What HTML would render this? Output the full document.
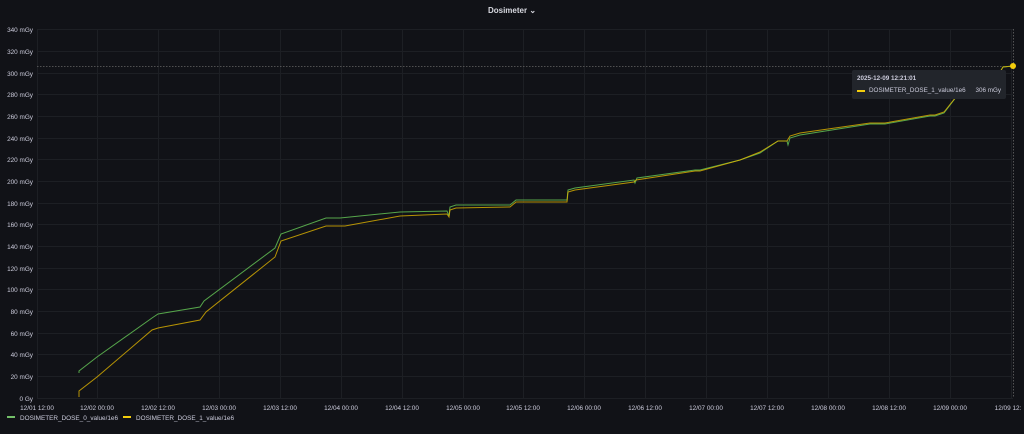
<!DOCTYPE html>
<html><head><style>
body{margin:0;background:#111217;width:1024px;height:434px;overflow:hidden;font-family:"Liberation Sans",sans-serif;color:#ccccdc}
.t{position:absolute;top:6px;left:0;width:1024px;text-align:center;font-size:8px;font-weight:bold;color:#d8d9e0}
svg{position:absolute;left:0;top:0}
.tip{position:absolute;left:852px;top:70px;width:154px;height:29px;background:#22252b;border-radius:2px;font-size:6.3px;color:#ccccdc}
</style></head><body>
<div class="t">Dosimeter ⌄</div>
<svg width="1024" height="434" font-family="Liberation Sans" font-size="6.4" fill="#ccccdc">
<g stroke="#1d1f24" stroke-width="1">
<line x1="37" x2="1013" y1="29.5" y2="29.5"/><line x1="37" x2="1013" y1="51.5" y2="51.5"/><line x1="37" x2="1013" y1="73.5" y2="73.5"/><line x1="37" x2="1013" y1="94.5" y2="94.5"/><line x1="37" x2="1013" y1="116.5" y2="116.5"/><line x1="37" x2="1013" y1="138.5" y2="138.5"/><line x1="37" x2="1013" y1="159.5" y2="159.5"/><line x1="37" x2="1013" y1="181.5" y2="181.5"/><line x1="37" x2="1013" y1="203.5" y2="203.5"/><line x1="37" x2="1013" y1="224.5" y2="224.5"/><line x1="37" x2="1013" y1="246.5" y2="246.5"/><line x1="37" x2="1013" y1="268.5" y2="268.5"/><line x1="37" x2="1013" y1="289.5" y2="289.5"/><line x1="37" x2="1013" y1="311.5" y2="311.5"/><line x1="37" x2="1013" y1="333.5" y2="333.5"/><line x1="37" x2="1013" y1="354.5" y2="354.5"/><line x1="37" x2="1013" y1="376.5" y2="376.5"/><line x1="37" x2="1013" y1="398.5" y2="398.5"/>
<line x1="37.5" x2="37.5" y1="29" y2="398"/><line x1="97.5" x2="97.5" y1="29" y2="398"/><line x1="158.5" x2="158.5" y1="29" y2="398"/><line x1="219.5" x2="219.5" y1="29" y2="398"/><line x1="280.5" x2="280.5" y1="29" y2="398"/><line x1="341.5" x2="341.5" y1="29" y2="398"/><line x1="402.5" x2="402.5" y1="29" y2="398"/><line x1="463.5" x2="463.5" y1="29" y2="398"/><line x1="523.5" x2="523.5" y1="29" y2="398"/><line x1="584.5" x2="584.5" y1="29" y2="398"/><line x1="645.5" x2="645.5" y1="29" y2="398"/><line x1="706.5" x2="706.5" y1="29" y2="398"/><line x1="767.5" x2="767.5" y1="29" y2="398"/><line x1="828.5" x2="828.5" y1="29" y2="398"/><line x1="889.5" x2="889.5" y1="29" y2="398"/><line x1="950.5" x2="950.5" y1="29" y2="398"/><line x1="1011.5" x2="1011.5" y1="29" y2="398"/>
</g>
<line x1="37" x2="1013" y1="66.5" y2="66.5" stroke="#666" stroke-dasharray="1.5,1.5" stroke-width="0.8"/>
<line x1="1013.5" x2="1013.5" y1="29" y2="398" stroke="#666" stroke-dasharray="1.5,1.5" stroke-width="0.8"/>
<g text-anchor="end">
<text x="33" y="32">340 mGy</text><text x="33" y="54">320 mGy</text><text x="33" y="76">300 mGy</text><text x="33" y="97">280 mGy</text><text x="33" y="119">260 mGy</text><text x="33" y="141">240 mGy</text><text x="33" y="162">220 mGy</text><text x="33" y="184">200 mGy</text><text x="33" y="206">180 mGy</text><text x="33" y="227">160 mGy</text><text x="33" y="249">140 mGy</text><text x="33" y="271">120 mGy</text><text x="33" y="292">100 mGy</text><text x="33" y="314">80 mGy</text><text x="33" y="336">60 mGy</text><text x="33" y="357">40 mGy</text><text x="33" y="379">20 mGy</text><text x="33" y="401">0 Gy</text>
</g>
<g text-anchor="middle">
<text x="37" y="410">12/01 12:00</text><text x="97" y="410">12/02 00:00</text><text x="158" y="410">12/02 12:00</text><text x="219" y="410">12/03 00:00</text><text x="280" y="410">12/03 12:00</text><text x="341" y="410">12/04 00:00</text><text x="402" y="410">12/04 12:00</text><text x="463" y="410">12/05 00:00</text><text x="523" y="410">12/05 12:00</text><text x="584" y="410">12/06 00:00</text><text x="645" y="410">12/06 12:00</text><text x="706" y="410">12/07 00:00</text><text x="767" y="410">12/07 12:00</text><text x="828" y="410">12/08 00:00</text><text x="889" y="410">12/08 12:00</text><text x="950" y="410">12/09 00:00</text><text x="1008" y="410">12/09 12:</text>
</g>
<polyline fill="none" stroke="#56a64b" stroke-width="1" points="79,373 79,371 97,357 152,318 158,314 200,307 204,301 275,248 281,234 326,218 340,218 400,212 447,211 449,216 450,207 456,205 510,205 516,200 567,200 568,190 575,188 634,180 635,183 637,178 695,170 700,170 740,160 760,153 778,141 787,141 788,145 790,138 800,135 870,124 885,124 930,116 935,116 944,113 960,92 1000,72 1003,67 1013,66"/>
<polyline fill="none" stroke="#e0b400" stroke-width="1" opacity="0.8" points="79,397 79,391 97,377 152,330 158,328 200,320 206,312 275,257 281,241 326,226 345,226 400,216 447,214 449,217 450,210 456,208 510,207 516,202 567,202 568,192 575,190 634,182 636,180 695,171 700,171 740,160 760,152 778,141 787,141 790,136 800,133 870,123 885,123 930,115 935,115 944,112 960,92 1000,72 1003,67 1013,66"/>
<circle cx="1013" cy="66" r="3" fill="#f2cc0c"/>
<rect x="7" y="416" width="8" height="2" fill="#73bf69"/><text x="20" y="420">DOSIMETER_DOSE_0_value/1e6</text>
<rect x="123" y="416" width="8" height="2" fill="#f2cc0c"/><text x="136" y="420">DOSIMETER_DOSE_1_value/1e6</text>
</svg>
<div class="tip"><div style="position:absolute;left:5px;top:5px;font-weight:bold">2025-12-09 12:21:01</div>
<div style="position:absolute;left:5px;top:20px;width:8px;height:2px;background:#f2cc0c"></div>
<div style="position:absolute;left:17px;top:17px">DOSIMETER_DOSE_1_value/1e6</div>
<div style="position:absolute;right:5px;top:17px">306 mGy</div></div>
</body></html>
